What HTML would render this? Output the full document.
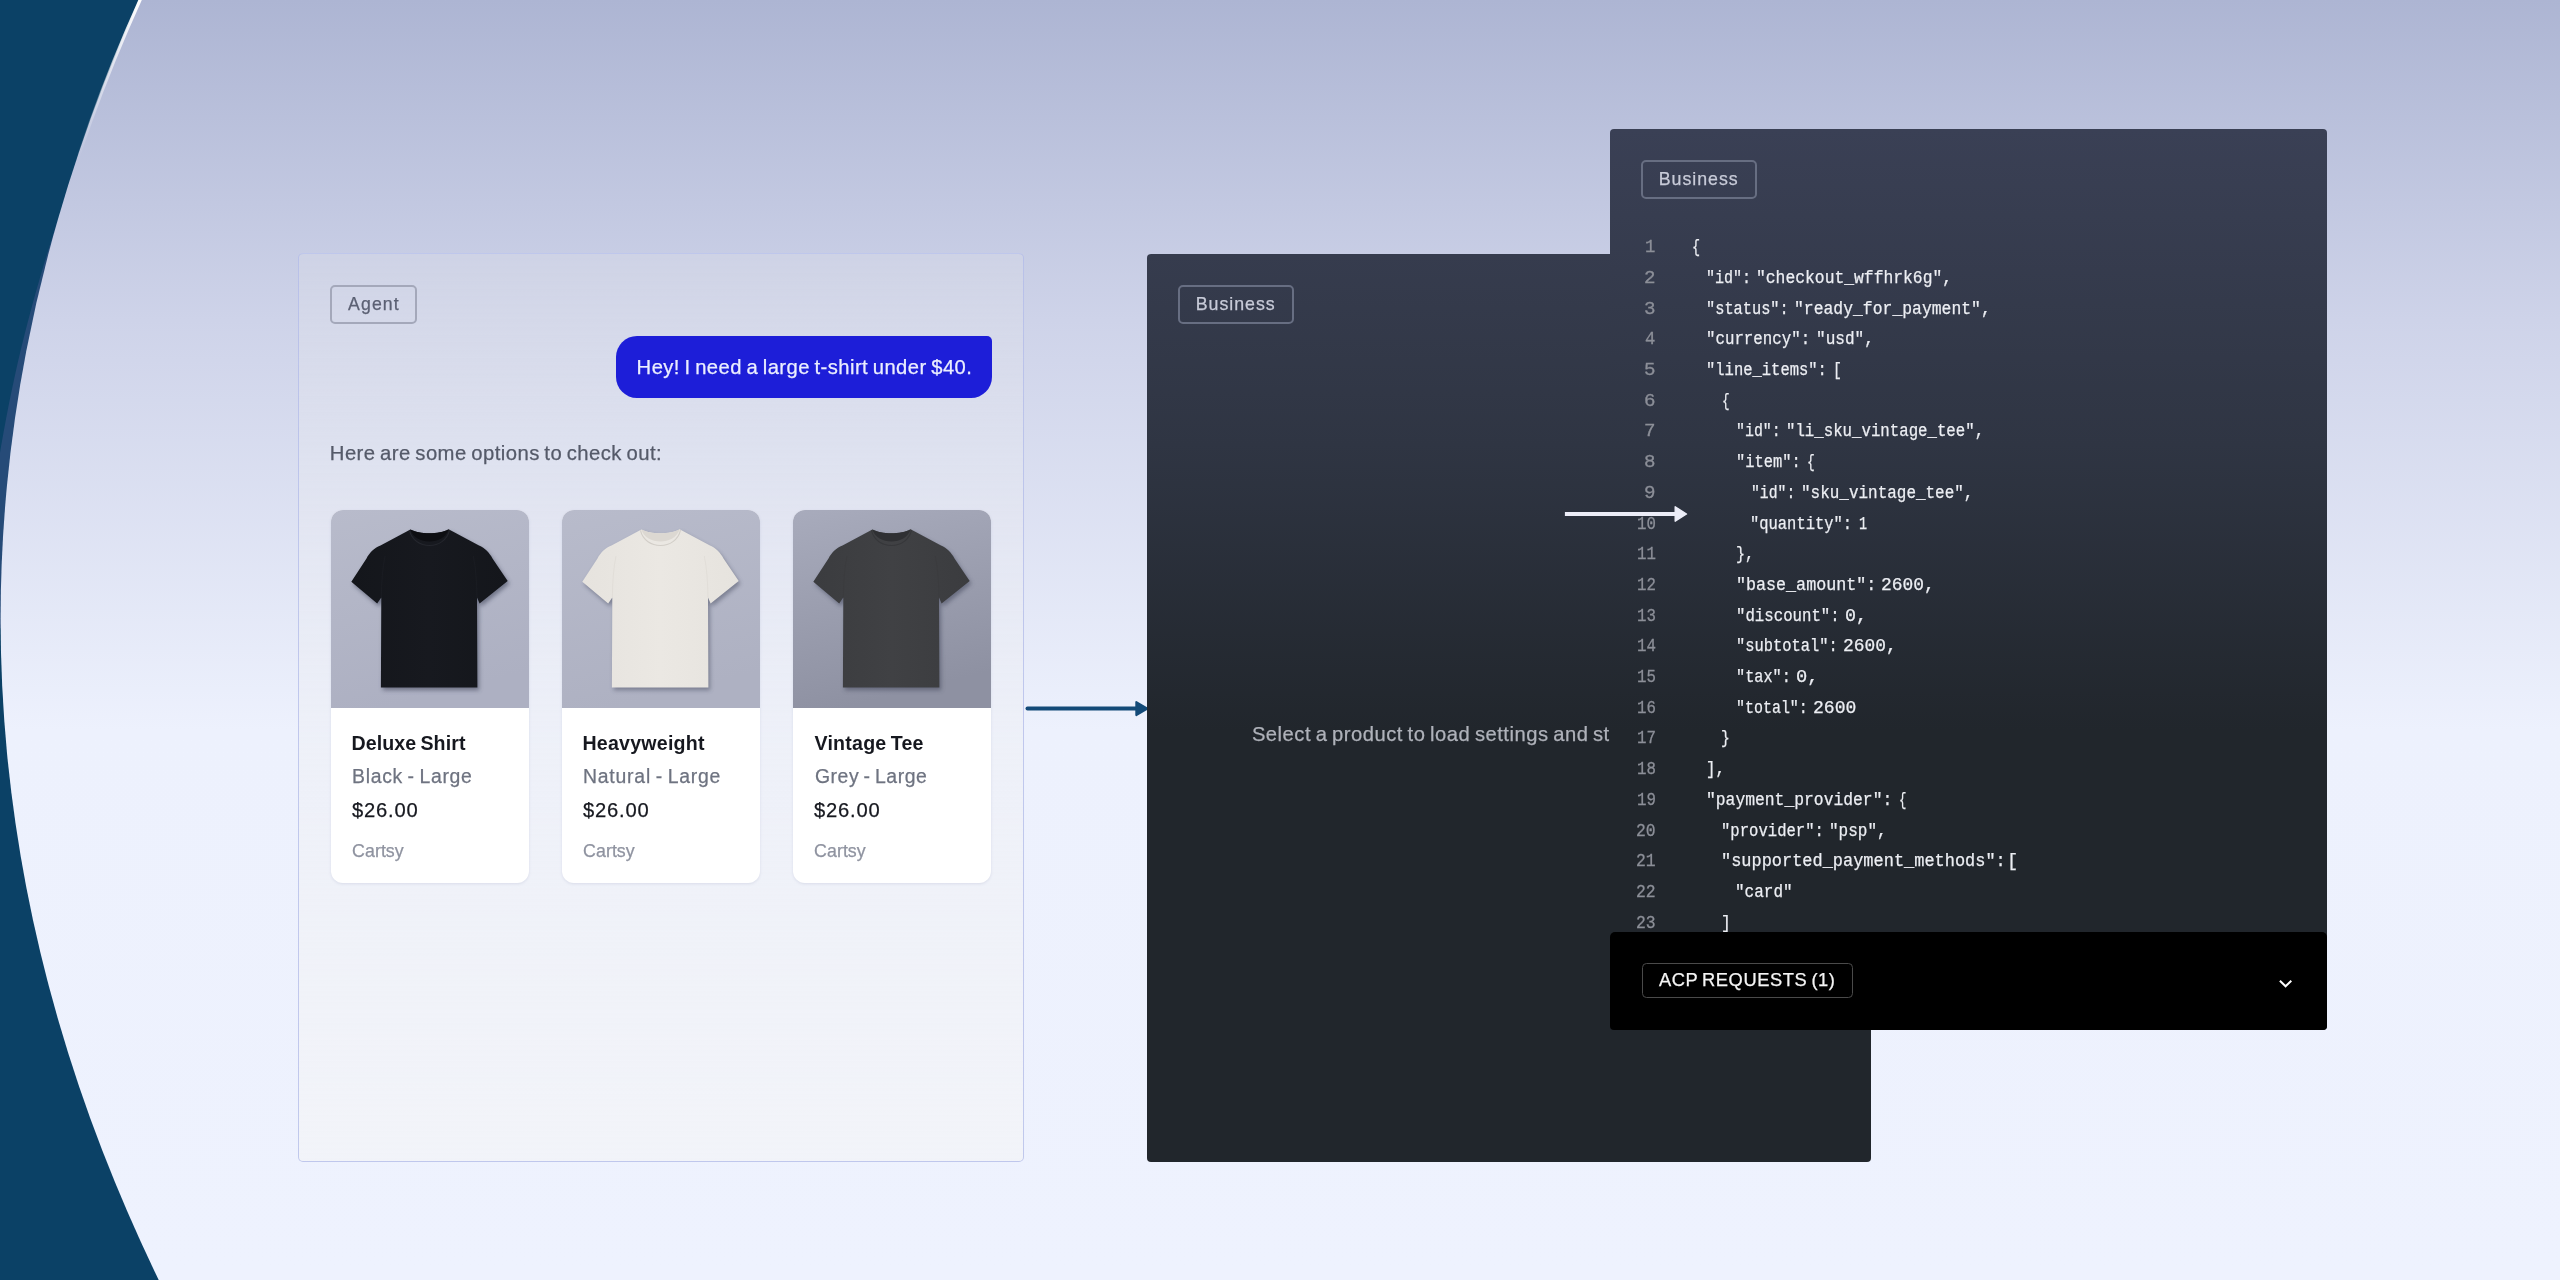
<!DOCTYPE html>
<html>
<head>
<meta charset="utf-8">
<title>ACP demo</title>
<style>
*{box-sizing:border-box;margin:0;padding:0}
html,body{width:2560px;height:1280px;overflow:hidden}
body{position:relative;font-family:"Liberation Sans",sans-serif;background:#0b4166;}
#bg{position:absolute;left:0;top:0;width:2560px;height:1280px}
.abs{position:absolute}
.tx{position:absolute;white-space:pre;display:block}
#agent{position:absolute;left:298px;top:253px;width:725.8px;height:909px;border:1px solid rgba(176,186,232,.75);border-radius:5px;
 background:linear-gradient(180deg,rgba(232,231,234,.22) 0%,rgba(238,239,243,.45) 50%,rgba(243,244,247,.78) 100%);}
.tag{position:absolute;border:2px solid #a4a8ba;border-radius:5px}
.tag.dark{border-color:#676e82}
#bubble{position:absolute;left:615.7px;top:336.2px;width:376.2px;height:62px;background:#1d1ed8;border-radius:21px 5px 21px 21px}
.card{position:absolute;top:509.8px;width:198px;height:373px;border-radius:12px;background:#fff;overflow:hidden;box-shadow:0 1px 3px rgba(120,130,170,.18)}
.card svg{display:block;width:198px;height:198px}
.dark-panel{position:absolute;border-radius:4px;overflow:hidden}
#biz1{left:1146.5px;top:253.5px;width:724px;height:908px;background:linear-gradient(180deg,#363c4e 0%,#2f3543 21%,#21262c 52.5%,#21262c 100%)}
#biz2{left:1610px;top:128.8px;width:717.2px;height:901px;background:linear-gradient(180deg,#3a4055 0%,#2f3543 35%,#21262c 66.7%,#21262c 100%)}
#acp{position:absolute;left:1610px;top:932.2px;width:717.2px;height:97.6px;background:#000;border-radius:5px 5px 4px 4px}
#acptag{position:absolute;left:1642px;top:963.1px;width:211px;height:34.7px;border:1px solid #4a4a4a;border-radius:4.5px}
</style>
</head>
<body>
<div id="W" style="position:absolute;left:0;top:0;width:2560px;height:1280px;will-change:transform">
<svg id="bg" viewBox="0 0 2560 1280">
 <defs>
  <linearGradient id="pg" x1="0" y1="0" x2="0" y2="1280" gradientUnits="userSpaceOnUse">
   <stop offset="0" stop-color="#adb5d3"/>
   <stop offset="0.25" stop-color="#ced3e9"/>
   <stop offset="0.57" stop-color="#edf1fd"/>
   <stop offset="1" stop-color="#eef2fe"/>
  </linearGradient>
  <linearGradient id="hl" x1="0" y1="0" x2="0" y2="160" gradientUnits="userSpaceOnUse">
   <stop offset="0" stop-color="#fff" stop-opacity="1"/>
   <stop offset="1" stop-color="#fff" stop-opacity="0"/>
  </linearGradient>
 </defs>
 <rect width="2560" height="1280" fill="#0b4166"/>
 <path d="M57.1 222 L52.8 236 L48.3 250 L44.0 264 L39.9 278 L35.9 292 L32.0 306 L28.3 320 L24.7 334 L21.2 348 L17.9 362 L14.8 376 L11.8 390 L8.9 404 L6.2 418 L3.6 432 L1.1 446 L-1.2 460 L-3.4 474 L-5.4 488 L-7.3 502 L-9.0 516 L-10.7 530 L-12.1 544 L-13.5 558 L-14.7 572 L-15.7 586 L-16.6 600 L-17.4 614 L-18.0 628 L1.6 628 L1.6 614 L1.7 600 L2.0 586 L2.4 572 L2.9 558 L3.6 544 L4.4 530 L5.4 516 L6.5 502 L7.7 488 L9.1 474 L10.6 460 L12.3 446 L14.1 432 L16.0 418 L18.1 404 L20.3 390 L22.7 376 L25.2 362 L27.9 348 L30.7 334 L33.6 320 L36.7 306 L39.9 292 L43.2 278 L46.8 264 L50.4 250 L54.2 236 L58.1 222Z" fill="#264b78"/>
 <ellipse cx="5325.43" cy="619.07" rx="5324.83" ry="2732.32" fill="url(#pg)"/>
 <ellipse cx="5325.43" cy="619.07" rx="5323.83" ry="2731.82" fill="none" stroke="url(#hl)" stroke-width="3.2"/>
 <rect x="1300" y="0" width="1260" height="1280" fill="url(#pg)"/>
</svg>

<div id="agent"></div>
<div class="tag" style="left:329.8px;top:285.1px;width:87px;height:38.7px"></div>
<div id="bubble"></div>

<div class="card" style="left:331px"><svg viewBox="0 0 198 198">
<defs><linearGradient id="bg331" x1="0" y1="0" x2="0.25" y2="1"><stop offset="0" stop-color="#b8bbcb"/><stop offset="1" stop-color="#adb0c2"/></linearGradient>
<linearGradient id="sh331" x1="0" y1="0" x2="1" y2="0"><stop offset="0" stop-color="#14161b"/><stop offset=".5" stop-color="#17191f"/><stop offset="1" stop-color="#14161b"/></linearGradient>
<filter id="ds331" x="-20%" y="-20%" width="140%" height="140%"><feGaussianBlur stdDeviation="2.2"/></filter></defs>
<rect width="198" height="198" fill="url(#bg331)"/>
<path d="M79.4 19.5C88 24.5 109 24.5 117.6 19.2L148 35.6C154 38 158.5 43 161.5 48.5L176.7 71L148.6 93.6L146 87.5L146.4 177.5L49.9 177.5L50.3 87.5L46.2 93.6L20.3 71.7L35.5 48.5C38.5 43 43 38 49.5 35.6Z" transform="translate(1.8 2.8)" fill="#3a3f55" opacity="0.55" filter="url(#ds331)"/>
<path d="M79.4 19.5C88 24.5 109 24.5 117.6 19.2L148 35.6C154 38 158.5 43 161.5 48.5L176.7 71L148.6 93.6L146 87.5L146.4 177.5L49.9 177.5L50.3 87.5L46.2 93.6L20.3 71.7L35.5 48.5C38.5 43 43 38 49.5 35.6Z" fill="url(#sh331)"/>
<path d="M79.4 19.5C88 24.5 109 24.5 117.6 19.2C113 35.5 84 35.5 79.4 19.5Z" fill="#0d0e12"/>
<path d="M78.5 20.4C83 40.5 114 40.5 118.5 20.1" fill="none" stroke="#24262d" stroke-width="1.1"/>
<path d="M50.3 87.5C50.6 72 51.5 58 54 46M146 87.5C145.7 72 144.8 58 142.3 46" fill="none" stroke="#1f2128" stroke-width=".8" opacity=".6"/>
</svg></div>
<div class="card" style="left:562px"><svg viewBox="0 0 198 198">
<defs><linearGradient id="bg562" x1="0" y1="0" x2="0.25" y2="1"><stop offset="0" stop-color="#b8bbcb"/><stop offset="1" stop-color="#aeb1c2"/></linearGradient>
<linearGradient id="sh562" x1="0" y1="0" x2="1" y2="0"><stop offset="0" stop-color="#e6e3de"/><stop offset=".5" stop-color="#ebe8e3"/><stop offset="1" stop-color="#e6e3de"/></linearGradient>
<filter id="ds562" x="-20%" y="-20%" width="140%" height="140%"><feGaussianBlur stdDeviation="2.2"/></filter></defs>
<rect width="198" height="198" fill="url(#bg562)"/>
<path d="M79.4 19.5C88 24.5 109 24.5 117.6 19.2L148 35.6C154 38 158.5 43 161.5 48.5L176.7 71L148.6 93.6L146 87.5L146.4 177.5L49.9 177.5L50.3 87.5L46.2 93.6L20.3 71.7L35.5 48.5C38.5 43 43 38 49.5 35.6Z" transform="translate(1.8 2.8)" fill="#3a3f55" opacity="0.45" filter="url(#ds562)"/>
<path d="M79.4 19.5C88 24.5 109 24.5 117.6 19.2L148 35.6C154 38 158.5 43 161.5 48.5L176.7 71L148.6 93.6L146 87.5L146.4 177.5L49.9 177.5L50.3 87.5L46.2 93.6L20.3 71.7L35.5 48.5C38.5 43 43 38 49.5 35.6Z" fill="url(#sh562)"/>
<path d="M79.4 19.5C88 24.5 109 24.5 117.6 19.2C113 35.5 84 35.5 79.4 19.5Z" fill="#dcd8d2"/>
<path d="M78.5 20.4C83 40.5 114 40.5 118.5 20.1" fill="none" stroke="#d2cec8" stroke-width="1.1"/>
<path d="M50.3 87.5C50.6 72 51.5 58 54 46M146 87.5C145.7 72 144.8 58 142.3 46" fill="none" stroke="#d9d5cf" stroke-width=".8" opacity=".6"/>
</svg></div>
<div class="card" style="left:793px"><svg viewBox="0 0 198 198">
<defs><linearGradient id="bg793" x1="0" y1="0" x2="0.25" y2="1"><stop offset="0" stop-color="#a8abbc"/><stop offset="1" stop-color="#8e91a2"/></linearGradient>
<linearGradient id="sh793" x1="0" y1="0" x2="1" y2="0"><stop offset="0" stop-color="#3b3c3f"/><stop offset=".5" stop-color="#404144"/><stop offset="1" stop-color="#3b3c3f"/></linearGradient>
<filter id="ds793" x="-20%" y="-20%" width="140%" height="140%"><feGaussianBlur stdDeviation="2.2"/></filter></defs>
<rect width="198" height="198" fill="url(#bg793)"/>
<path d="M79.4 19.5C88 24.5 109 24.5 117.6 19.2L148 35.6C154 38 158.5 43 161.5 48.5L176.7 71L148.6 93.6L146 87.5L146.4 177.5L49.9 177.5L50.3 87.5L46.2 93.6L20.3 71.7L35.5 48.5C38.5 43 43 38 49.5 35.6Z" transform="translate(1.8 2.8)" fill="#3a3f55" opacity="0.5" filter="url(#ds793)"/>
<path d="M79.4 19.5C88 24.5 109 24.5 117.6 19.2L148 35.6C154 38 158.5 43 161.5 48.5L176.7 71L148.6 93.6L146 87.5L146.4 177.5L49.9 177.5L50.3 87.5L46.2 93.6L20.3 71.7L35.5 48.5C38.5 43 43 38 49.5 35.6Z" fill="url(#sh793)"/>
<path d="M79.4 19.5C88 24.5 109 24.5 117.6 19.2C113 35.5 84 35.5 79.4 19.5Z" fill="#2f3033"/>
<path d="M78.5 20.4C83 40.5 114 40.5 118.5 20.1" fill="none" stroke="#36373a" stroke-width="1.1"/>
<path d="M50.3 87.5C50.6 72 51.5 58 54 46M146 87.5C145.7 72 144.8 58 142.3 46" fill="none" stroke="#38393c" stroke-width=".8" opacity=".6"/>
</svg></div>
<span class="tx" style="left:351.50px;top:722.91px;font:bold 19.6px/40px 'Liberation Sans',sans-serif;letter-spacing:0.100px;word-spacing:-1.5px;color:#16181f;-webkit-text-stroke:0px #16181f;">Deluxe Shirt</span>
<span class="tx" style="left:352.00px;top:756.28px;font:normal 19.4px/40px 'Liberation Sans',sans-serif;letter-spacing:0.720px;word-spacing:-1.5px;color:#6e7380;-webkit-text-stroke:0.25px #6e7380;">Black - Large</span>
<span class="tx" style="left:352.10px;top:789.50px;font:normal 20.2px/40px 'Liberation Sans',sans-serif;letter-spacing:0.776px;word-spacing:-1.5px;color:#16181f;-webkit-text-stroke:0.25px #16181f;">$26.00</span>
<span class="tx" style="left:352.10px;top:830.63px;font:normal 17.8px/40px 'Liberation Sans',sans-serif;letter-spacing:0.044px;word-spacing:-1.5px;color:#8f93a0;-webkit-text-stroke:0.25px #8f93a0;">Cartsy</span>
<span class="tx" style="left:582.50px;top:722.91px;font:bold 19.6px/40px 'Liberation Sans',sans-serif;letter-spacing:0.224px;word-spacing:-1.5px;color:#16181f;-webkit-text-stroke:0px #16181f;">Heavyweight</span>
<span class="tx" style="left:583.00px;top:756.28px;font:normal 19.4px/40px 'Liberation Sans',sans-serif;letter-spacing:0.789px;word-spacing:-1.5px;color:#6e7380;-webkit-text-stroke:0.25px #6e7380;">Natural - Large</span>
<span class="tx" style="left:583.10px;top:789.50px;font:normal 20.2px/40px 'Liberation Sans',sans-serif;letter-spacing:0.776px;word-spacing:-1.5px;color:#16181f;-webkit-text-stroke:0.25px #16181f;">$26.00</span>
<span class="tx" style="left:583.10px;top:830.63px;font:normal 17.8px/40px 'Liberation Sans',sans-serif;letter-spacing:0.044px;word-spacing:-1.5px;color:#8f93a0;-webkit-text-stroke:0.25px #8f93a0;">Cartsy</span>
<span class="tx" style="left:814.50px;top:722.91px;font:bold 19.6px/40px 'Liberation Sans',sans-serif;letter-spacing:0.223px;word-spacing:-1.5px;color:#16181f;-webkit-text-stroke:0px #16181f;">Vintage Tee</span>
<span class="tx" style="left:815.00px;top:756.28px;font:normal 19.4px/40px 'Liberation Sans',sans-serif;letter-spacing:0.540px;word-spacing:-1.5px;color:#6e7380;-webkit-text-stroke:0.25px #6e7380;">Grey - Large</span>
<span class="tx" style="left:814.10px;top:789.50px;font:normal 20.2px/40px 'Liberation Sans',sans-serif;letter-spacing:0.776px;word-spacing:-1.5px;color:#16181f;-webkit-text-stroke:0.25px #16181f;">$26.00</span>
<span class="tx" style="left:814.10px;top:830.63px;font:normal 17.8px/40px 'Liberation Sans',sans-serif;letter-spacing:0.044px;word-spacing:-1.5px;color:#8f93a0;-webkit-text-stroke:0.25px #8f93a0;">Cartsy</span>

<svg class="abs" style="left:1020px;top:696px" width="132" height="26" viewBox="0 0 132 26"><path d="M7.5 12.6H118" stroke="#134a78" stroke-width="4" stroke-linecap="round" fill="none"/><path d="M116.3 6.1L127.4 12.6L116.3 19.1Z" fill="#134a78" stroke="#134a78" stroke-width="2" stroke-linejoin="round"/></svg>

<div class="dark-panel" id="biz1"></div>
<div class="tag dark" style="left:1177.9px;top:284.9px;width:116px;height:39px"></div>
<span class="tx" style="left:1251.90px;top:713.70px;font:normal 20.2px/40px 'Liberation Sans',sans-serif;letter-spacing:0.511px;word-spacing:-1.5px;color:#afb2ba;-webkit-text-stroke:0.25px #afb2ba;">Select a product to load settings and st</span>
<span class="tx" style="left:348.10px;top:283.57px;font:normal 17.7px/40px 'Liberation Sans',sans-serif;letter-spacing:1.085px;word-spacing:-1.5px;color:#5b6073;-webkit-text-stroke:0.25px #5b6073;">Agent</span>
<span class="tx" style="left:636.60px;top:347.20px;font:normal 20.2px/40px 'Liberation Sans',sans-serif;letter-spacing:0.460px;word-spacing:-1.5px;color:#ebeeff;-webkit-text-stroke:0.25px #ebeeff;">Hey! I need a large t-shirt under $40.</span>
<span class="tx" style="left:329.80px;top:433.47px;font:normal 20.3px/40px 'Liberation Sans',sans-serif;letter-spacing:0.442px;word-spacing:-1.5px;color:#555a69;-webkit-text-stroke:0.25px #555a69;">Here are some options to check out:</span>
<span class="tx" style="left:1195.70px;top:283.63px;font:normal 17.8px/40px 'Liberation Sans',sans-serif;letter-spacing:0.977px;word-spacing:-1.5px;color:#c8cbd8;-webkit-text-stroke:0.25px #c8cbd8;">Business</span>

<div class="dark-panel" id="biz2"></div>
<div class="tag dark" style="left:1640.9px;top:159.9px;width:116px;height:39px"></div>
<span class="tx" style="left:1658.70px;top:158.63px;font:normal 17.8px/40px 'Liberation Sans',sans-serif;letter-spacing:0.977px;word-spacing:-1.5px;color:#c8cbd8;-webkit-text-stroke:0.25px #c8cbd8;">Business</span>
<svg class="abs" style="left:1560px;top:500px" width="134" height="28" viewBox="0 0 134 28"><path d="M4.9 14H116" stroke="#ecedf8" stroke-width="4.2" stroke-linecap="butt" fill="none"/><path d="M115.2 6.8L126.5 14L115.2 21.2Z" fill="#ecedf8" stroke="#ecedf8" stroke-width="1.4" stroke-linejoin="round"/></svg>
<span class="tx" style="left:1691.73px;top:227.21px;font:normal 17.6px/40px 'Liberation Mono',monospace;color:#eceef3;transform-origin:0 0;transform:scaleX(0.7667);letter-spacing:0px;word-spacing:0px;-webkit-text-stroke:0.25px #eceef3">{</span>
<span class="tx" style="left:1645.32px;top:227.21px;font:normal 17.6px/40px 'Liberation Mono',monospace;color:#8c8f98;transform-origin:0 0;transform:scaleX(0.9778);letter-spacing:0px;word-spacing:0px;-webkit-text-stroke:0.3px #8c8f98">1</span>
<span class="tx" style="left:1706.04px;top:257.91px;font:normal 17.6px/40px 'Liberation Mono',monospace;color:#eceef3;transform-origin:0 0;transform:scaleX(0.8543);letter-spacing:0px;word-spacing:0px;-webkit-text-stroke:0.25px #eceef3">&quot;id&quot;:</span>
<span class="tx" style="left:1756.24px;top:257.91px;font:normal 17.6px/40px 'Liberation Mono',monospace;color:#eceef3;transform-origin:0 0;transform:scaleX(0.9286);letter-spacing:0px;word-spacing:0px;-webkit-text-stroke:0.25px #eceef3">&quot;checkout_wffhrk6g&quot;,</span>
<span class="tx" style="left:1644.21px;top:257.91px;font:normal 17.6px/40px 'Liberation Mono',monospace;color:#8c8f98;transform-origin:0 0;transform:scaleX(1.0889);letter-spacing:0px;word-spacing:0px;-webkit-text-stroke:0.3px #8c8f98">2</span>
<span class="tx" style="left:1706.01px;top:288.61px;font:normal 17.6px/40px 'Liberation Mono',monospace;color:#eceef3;transform-origin:0 0;transform:scaleX(0.8702);letter-spacing:0px;word-spacing:0px;-webkit-text-stroke:0.25px #eceef3">&quot;status&quot;:</span>
<span class="tx" style="left:1793.74px;top:288.61px;font:normal 17.6px/40px 'Liberation Mono',monospace;color:#eceef3;transform-origin:0 0;transform:scaleX(0.9318);letter-spacing:0px;word-spacing:0px;-webkit-text-stroke:0.25px #eceef3">&quot;ready_for_payment&quot;,</span>
<span class="tx" style="left:1644.21px;top:288.61px;font:normal 17.6px/40px 'Liberation Mono',monospace;color:#8c8f98;transform-origin:0 0;transform:scaleX(1.0889);letter-spacing:0px;word-spacing:0px;-webkit-text-stroke:0.3px #8c8f98">3</span>
<span class="tx" style="left:1705.96px;top:319.31px;font:normal 17.6px/40px 'Liberation Mono',monospace;color:#eceef3;transform-origin:0 0;transform:scaleX(0.8966);letter-spacing:0px;word-spacing:0px;-webkit-text-stroke:0.25px #eceef3">&quot;currency&quot;:</span>
<span class="tx" style="left:1815.67px;top:319.31px;font:normal 17.6px/40px 'Liberation Mono',monospace;color:#eceef3;transform-origin:0 0;transform:scaleX(0.9139);letter-spacing:0px;word-spacing:0px;-webkit-text-stroke:0.25px #eceef3">&quot;usd&quot;,</span>
<span class="tx" style="left:1645.30px;top:319.31px;font:normal 17.6px/40px 'Liberation Mono',monospace;color:#8c8f98;transform-origin:0 0;transform:scaleX(0.9800);letter-spacing:0px;word-spacing:0px;-webkit-text-stroke:0.3px #8c8f98">4</span>
<span class="tx" style="left:1705.99px;top:350.01px;font:normal 17.6px/40px 'Liberation Mono',monospace;color:#eceef3;transform-origin:0 0;transform:scaleX(0.8808);letter-spacing:0px;word-spacing:0px;-webkit-text-stroke:0.25px #eceef3">&quot;line_items&quot;:</span>
<span class="tx" style="left:1833.10px;top:350.01px;font:normal 17.6px/40px 'Liberation Mono',monospace;color:#eceef3;transform-origin:0 0;transform:scaleX(0.8333);letter-spacing:0px;word-spacing:0px;-webkit-text-stroke:0.25px #eceef3">[</span>
<span class="tx" style="left:1644.21px;top:350.01px;font:normal 17.6px/40px 'Liberation Mono',monospace;color:#8c8f98;transform-origin:0 0;transform:scaleX(1.0889);letter-spacing:0px;word-spacing:0px;-webkit-text-stroke:0.3px #8c8f98">5</span>
<span class="tx" style="left:1721.78px;top:380.71px;font:normal 17.6px/40px 'Liberation Mono',monospace;color:#eceef3;transform-origin:0 0;transform:scaleX(0.7222);letter-spacing:0px;word-spacing:0px;-webkit-text-stroke:0.25px #eceef3">{</span>
<span class="tx" style="left:1644.21px;top:380.71px;font:normal 17.6px/40px 'Liberation Mono',monospace;color:#8c8f98;transform-origin:0 0;transform:scaleX(1.0889);letter-spacing:0px;word-spacing:0px;-webkit-text-stroke:0.3px #8c8f98">6</span>
<span class="tx" style="left:1735.81px;top:411.41px;font:normal 17.6px/40px 'Liberation Mono',monospace;color:#eceef3;transform-origin:0 0;transform:scaleX(0.8469);letter-spacing:0px;word-spacing:0px;-webkit-text-stroke:0.25px #eceef3">&quot;id&quot;:</span>
<span class="tx" style="left:1785.96px;top:411.41px;font:normal 17.6px/40px 'Liberation Mono',monospace;color:#eceef3;transform-origin:0 0;transform:scaleX(0.8935);letter-spacing:0px;word-spacing:0px;-webkit-text-stroke:0.25px #eceef3">&quot;li_sku_vintage_tee&quot;,</span>
<span class="tx" style="left:1644.21px;top:411.41px;font:normal 17.6px/40px 'Liberation Mono',monospace;color:#8c8f98;transform-origin:0 0;transform:scaleX(1.0889);letter-spacing:0px;word-spacing:0px;-webkit-text-stroke:0.3px #8c8f98">7</span>
<span class="tx" style="left:1735.74px;top:442.11px;font:normal 17.6px/40px 'Liberation Mono',monospace;color:#eceef3;transform-origin:0 0;transform:scaleX(0.8779);letter-spacing:0px;word-spacing:0px;-webkit-text-stroke:0.25px #eceef3">&quot;item&quot;:</span>
<span class="tx" style="left:1807.36px;top:442.11px;font:normal 17.6px/40px 'Liberation Mono',monospace;color:#eceef3;transform-origin:0 0;transform:scaleX(0.7389);letter-spacing:0px;word-spacing:0px;-webkit-text-stroke:0.25px #eceef3">{</span>
<span class="tx" style="left:1644.21px;top:442.11px;font:normal 17.6px/40px 'Liberation Mono',monospace;color:#8c8f98;transform-origin:0 0;transform:scaleX(1.0889);letter-spacing:0px;word-spacing:0px;-webkit-text-stroke:0.3px #8c8f98">8</span>
<span class="tx" style="left:1750.57px;top:472.81px;font:normal 17.6px/40px 'Liberation Mono',monospace;color:#eceef3;transform-origin:0 0;transform:scaleX(0.8395);letter-spacing:0px;word-spacing:0px;-webkit-text-stroke:0.25px #eceef3">&quot;id&quot;:</span>
<span class="tx" style="left:1800.69px;top:472.81px;font:normal 17.6px/40px 'Liberation Mono',monospace;color:#eceef3;transform-origin:0 0;transform:scaleX(0.9074);letter-spacing:0px;word-spacing:0px;-webkit-text-stroke:0.25px #eceef3">&quot;sku_vintage_tee&quot;,</span>
<span class="tx" style="left:1644.21px;top:472.81px;font:normal 17.6px/40px 'Liberation Mono',monospace;color:#8c8f98;transform-origin:0 0;transform:scaleX(1.0889);letter-spacing:0px;word-spacing:0px;-webkit-text-stroke:0.3px #8c8f98">9</span>
<span class="tx" style="left:1750.49px;top:503.51px;font:normal 17.6px/40px 'Liberation Mono',monospace;color:#eceef3;transform-origin:0 0;transform:scaleX(0.8786);letter-spacing:0px;word-spacing:0px;-webkit-text-stroke:0.25px #eceef3">&quot;quantity&quot;:</span>
<span class="tx" style="left:1859.23px;top:503.51px;font:normal 17.6px/40px 'Liberation Mono',monospace;color:#eceef3;transform-origin:0 0;transform:scaleX(0.7667);letter-spacing:0px;word-spacing:0px;-webkit-text-stroke:0.25px #eceef3">1</span>
<span class="tx" style="left:1636.71px;top:503.51px;font:normal 17.6px/40px 'Liberation Mono',monospace;color:#8c8f98;transform-origin:0 0;transform:scaleX(0.8948);letter-spacing:0px;word-spacing:0px;-webkit-text-stroke:0.3px #8c8f98">10</span>
<span class="tx" style="left:1736.04px;top:534.21px;font:normal 17.6px/40px 'Liberation Mono',monospace;color:#eceef3;transform-origin:0 0;transform:scaleX(0.8581);letter-spacing:0px;word-spacing:0px;-webkit-text-stroke:0.25px #eceef3">},</span>
<span class="tx" style="left:1636.71px;top:534.21px;font:normal 17.6px/40px 'Liberation Mono',monospace;color:#8c8f98;transform-origin:0 0;transform:scaleX(0.8948);letter-spacing:0px;word-spacing:0px;-webkit-text-stroke:0.3px #8c8f98">11</span>
<span class="tx" style="left:1735.60px;top:564.91px;font:normal 17.6px/40px 'Liberation Mono',monospace;color:#eceef3;transform-origin:0 0;transform:scaleX(0.9490);letter-spacing:0px;word-spacing:0px;-webkit-text-stroke:0.25px #eceef3">&quot;base_amount&quot;:</span>
<span class="tx" style="left:1881.48px;top:564.91px;font:normal 17.6px/40px 'Liberation Mono',monospace;color:#eceef3;transform-origin:0 0;transform:scaleX(1.0184);letter-spacing:0px;word-spacing:0px;-webkit-text-stroke:0.25px #eceef3">2600,</span>
<span class="tx" style="left:1636.71px;top:564.91px;font:normal 17.6px/40px 'Liberation Mono',monospace;color:#8c8f98;transform-origin:0 0;transform:scaleX(0.8948);letter-spacing:0px;word-spacing:0px;-webkit-text-stroke:0.3px #8c8f98">12</span>
<span class="tx" style="left:1735.71px;top:595.61px;font:normal 17.6px/40px 'Liberation Mono',monospace;color:#eceef3;transform-origin:0 0;transform:scaleX(0.8930);letter-spacing:0px;word-spacing:0px;-webkit-text-stroke:0.25px #eceef3">&quot;discount&quot;:</span>
<span class="tx" style="left:1845.21px;top:595.61px;font:normal 17.6px/40px 'Liberation Mono',monospace;color:#eceef3;transform-origin:0 0;transform:scaleX(1.0445);letter-spacing:0px;word-spacing:0px;-webkit-text-stroke:0.25px #eceef3">0,</span>
<span class="tx" style="left:1636.71px;top:595.61px;font:normal 17.6px/40px 'Liberation Mono',monospace;color:#8c8f98;transform-origin:0 0;transform:scaleX(0.8948);letter-spacing:0px;word-spacing:0px;-webkit-text-stroke:0.3px #8c8f98">13</span>
<span class="tx" style="left:1735.75px;top:626.31px;font:normal 17.6px/40px 'Liberation Mono',monospace;color:#eceef3;transform-origin:0 0;transform:scaleX(0.8763);letter-spacing:0px;word-spacing:0px;-webkit-text-stroke:0.25px #eceef3">&quot;subtotal&quot;:</span>
<span class="tx" style="left:1843.38px;top:626.31px;font:normal 17.6px/40px 'Liberation Mono',monospace;color:#eceef3;transform-origin:0 0;transform:scaleX(1.0184);letter-spacing:0px;word-spacing:0px;-webkit-text-stroke:0.25px #eceef3">2600,</span>
<span class="tx" style="left:1636.71px;top:626.31px;font:normal 17.6px/40px 'Liberation Mono',monospace;color:#8c8f98;transform-origin:0 0;transform:scaleX(0.8948);letter-spacing:0px;word-spacing:0px;-webkit-text-stroke:0.3px #8c8f98">14</span>
<span class="tx" style="left:1735.77px;top:657.01px;font:normal 17.6px/40px 'Liberation Mono',monospace;color:#eceef3;transform-origin:0 0;transform:scaleX(0.8652);letter-spacing:0px;word-spacing:0px;-webkit-text-stroke:0.25px #eceef3">&quot;tax&quot;:</span>
<span class="tx" style="left:1795.83px;top:657.01px;font:normal 17.6px/40px 'Liberation Mono',monospace;color:#eceef3;transform-origin:0 0;transform:scaleX(1.0670);letter-spacing:0px;word-spacing:0px;-webkit-text-stroke:0.25px #eceef3">0,</span>
<span class="tx" style="left:1636.71px;top:657.01px;font:normal 17.6px/40px 'Liberation Mono',monospace;color:#8c8f98;transform-origin:0 0;transform:scaleX(0.8948);letter-spacing:0px;word-spacing:0px;-webkit-text-stroke:0.3px #8c8f98">15</span>
<span class="tx" style="left:1735.70px;top:687.71px;font:normal 17.6px/40px 'Liberation Mono',monospace;color:#eceef3;transform-origin:0 0;transform:scaleX(0.8504);letter-spacing:0px;word-spacing:0px;-webkit-text-stroke:0.25px #eceef3">&quot;total&quot;:</span>
<span class="tx" style="left:1813.27px;top:687.71px;font:normal 17.6px/40px 'Liberation Mono',monospace;color:#eceef3;transform-origin:0 0;transform:scaleX(1.0277);letter-spacing:0px;word-spacing:0px;-webkit-text-stroke:0.25px #eceef3">2600</span>
<span class="tx" style="left:1636.71px;top:687.71px;font:normal 17.6px/40px 'Liberation Mono',monospace;color:#8c8f98;transform-origin:0 0;transform:scaleX(0.8948);letter-spacing:0px;word-spacing:0px;-webkit-text-stroke:0.3px #8c8f98">16</span>
<span class="tx" style="left:1721.36px;top:718.41px;font:normal 17.6px/40px 'Liberation Mono',monospace;color:#eceef3;transform-origin:0 0;transform:scaleX(0.8375);letter-spacing:0px;word-spacing:0px;-webkit-text-stroke:0.25px #eceef3">}</span>
<span class="tx" style="left:1636.71px;top:718.41px;font:normal 17.6px/40px 'Liberation Mono',monospace;color:#8c8f98;transform-origin:0 0;transform:scaleX(0.8948);letter-spacing:0px;word-spacing:0px;-webkit-text-stroke:0.3px #8c8f98">17</span>
<span class="tx" style="left:1705.90px;top:749.11px;font:normal 17.6px/40px 'Liberation Mono',monospace;color:#eceef3;transform-origin:0 0;transform:scaleX(0.8999);letter-spacing:0px;word-spacing:0px;-webkit-text-stroke:0.25px #eceef3">],</span>
<span class="tx" style="left:1636.71px;top:749.11px;font:normal 17.6px/40px 'Liberation Mono',monospace;color:#8c8f98;transform-origin:0 0;transform:scaleX(0.8948);letter-spacing:0px;word-spacing:0px;-webkit-text-stroke:0.3px #8c8f98">18</span>
<span class="tx" style="left:1705.84px;top:779.81px;font:normal 17.6px/40px 'Liberation Mono',monospace;color:#eceef3;transform-origin:0 0;transform:scaleX(0.9285);letter-spacing:0px;word-spacing:0px;-webkit-text-stroke:0.25px #eceef3">&quot;payment_provider&quot;:</span>
<span class="tx" style="left:1898.70px;top:779.81px;font:normal 17.6px/40px 'Liberation Mono',monospace;color:#eceef3;transform-origin:0 0;transform:scaleX(0.7000);letter-spacing:0px;word-spacing:0px;-webkit-text-stroke:0.25px #eceef3">{</span>
<span class="tx" style="left:1636.71px;top:779.81px;font:normal 17.6px/40px 'Liberation Mono',monospace;color:#8c8f98;transform-origin:0 0;transform:scaleX(0.8948);letter-spacing:0px;word-spacing:0px;-webkit-text-stroke:0.3px #8c8f98">19</span>
<span class="tx" style="left:1720.83px;top:810.51px;font:normal 17.6px/40px 'Liberation Mono',monospace;color:#eceef3;transform-origin:0 0;transform:scaleX(0.8862);letter-spacing:0px;word-spacing:0px;-webkit-text-stroke:0.25px #eceef3">&quot;provider&quot;:</span>
<span class="tx" style="left:1828.93px;top:810.51px;font:normal 17.6px/40px 'Liberation Mono',monospace;color:#eceef3;transform-origin:0 0;transform:scaleX(0.9113);letter-spacing:0px;word-spacing:0px;-webkit-text-stroke:0.25px #eceef3">&quot;psp&quot;,</span>
<span class="tx" style="left:1635.97px;top:810.51px;font:normal 17.6px/40px 'Liberation Mono',monospace;color:#8c8f98;transform-origin:0 0;transform:scaleX(0.9306);letter-spacing:0px;word-spacing:0px;-webkit-text-stroke:0.3px #8c8f98">20</span>
<span class="tx" style="left:1720.67px;top:841.21px;font:normal 17.6px/40px 'Liberation Mono',monospace;color:#eceef3;transform-origin:0 0;transform:scaleX(0.9632);letter-spacing:0px;word-spacing:0px;-webkit-text-stroke:0.25px #eceef3">&quot;supported_payment_methods&quot;:</span>
<span class="tx" style="left:2007.35px;top:841.21px;font:normal 17.6px/40px 'Liberation Mono',monospace;color:#eceef3;transform-origin:0 0;transform:scaleX(1.0500);letter-spacing:0px;word-spacing:0px;-webkit-text-stroke:0.25px #eceef3">[</span>
<span class="tx" style="left:1635.97px;top:841.21px;font:normal 17.6px/40px 'Liberation Mono',monospace;color:#8c8f98;transform-origin:0 0;transform:scaleX(0.9306);letter-spacing:0px;word-spacing:0px;-webkit-text-stroke:0.3px #8c8f98">21</span>
<span class="tx" style="left:1735.38px;top:871.91px;font:normal 17.6px/40px 'Liberation Mono',monospace;color:#eceef3;transform-origin:0 0;transform:scaleX(0.9099);letter-spacing:0px;word-spacing:0px;-webkit-text-stroke:0.25px #eceef3">&quot;card&quot;</span>
<span class="tx" style="left:1635.97px;top:871.91px;font:normal 17.6px/40px 'Liberation Mono',monospace;color:#8c8f98;transform-origin:0 0;transform:scaleX(0.9306);letter-spacing:0px;word-spacing:0px;-webkit-text-stroke:0.3px #8c8f98">22</span>
<span class="tx" style="left:1720.63px;top:902.61px;font:normal 17.6px/40px 'Liberation Mono',monospace;color:#eceef3;transform-origin:0 0;transform:scaleX(0.9333);letter-spacing:0px;word-spacing:0px;-webkit-text-stroke:0.25px #eceef3">]</span>
<span class="tx" style="left:1635.97px;top:902.61px;font:normal 17.6px/40px 'Liberation Mono',monospace;color:#8c8f98;transform-origin:0 0;transform:scaleX(0.9306);letter-spacing:0px;word-spacing:0px;-webkit-text-stroke:0.3px #8c8f98">23</span>
<div id="acp"></div>
<div id="acptag"></div>
<span class="tx" style="left:1658.90px;top:960.26px;font:normal 18.3px/40px 'Liberation Sans',sans-serif;letter-spacing:0.582px;word-spacing:-1.5px;color:#f5f5f5;-webkit-text-stroke:0.25px #f5f5f5;">ACP REQUESTS (1)</span>
<svg class="abs" style="left:2276px;top:976px" width="20" height="14" viewBox="0 0 20 14"><path d="M3.9 4.7L9.6 10.3L15.3 4.7" stroke="#fff" stroke-width="2" fill="none" stroke-linecap="butt" stroke-linejoin="miter"/></svg>


</div>
</body>
</html>
